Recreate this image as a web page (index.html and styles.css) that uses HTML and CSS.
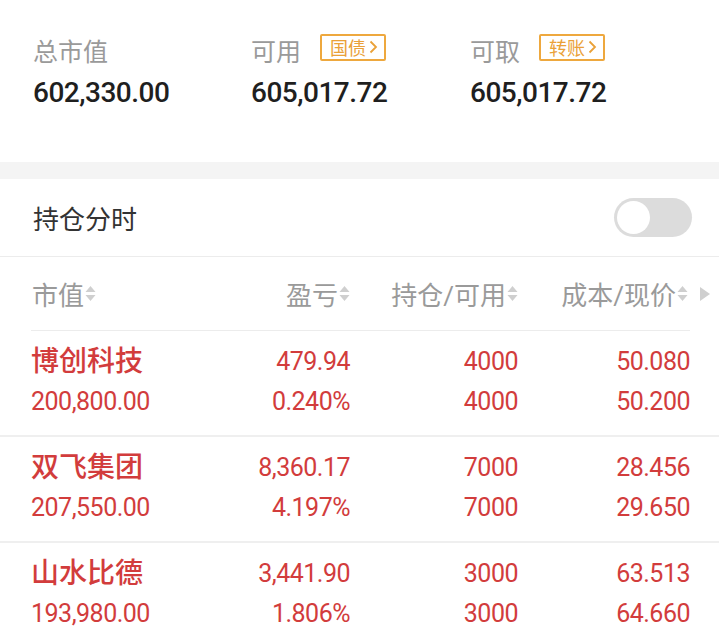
FILE: index.html
```html
<!DOCTYPE html>
<html lang="zh-CN">
<head>
    <meta charset="UTF-8">
    <meta name="viewport" content="width=device-width, initial-scale=1.0">
    <title>持仓</title>
    <link rel="stylesheet" href="styles.css">
</head>
<body>
    <div class="assets">
        <div class="asset">
            <div class="asset-label">总市值</div>
            <div class="asset-value">602,330.00</div>
        </div>
        <div class="asset">
            <div class="asset-label">可用
                <span class="tag">国债<svg width="9" height="14" viewBox="0 0 9 14"><polyline points="1.5,1.5 7,7 1.5,12.5" /></svg></span>
            </div>
            <div class="asset-value">605,017.72</div>
        </div>
        <div class="asset">
            <div class="asset-label">可取
                <span class="tag">转账<svg width="9" height="14" viewBox="0 0 9 14"><polyline points="1.5,1.5 7,7 1.5,12.5" /></svg></span>
            </div>
            <div class="asset-value">605,017.72</div>
        </div>
    </div>

    <div class="gap"></div>

    <div class="switch-row">
        <span class="switch-title">持仓分时</span>
        <div class="toggle"><div class="knob"></div></div>
    </div>

    <div class="table-head">
        <div class="th th-left">市值<svg class="sort" width="11" height="17" viewBox="0 0 11 17"><polygon points="0.5,7 5.5,1 10.5,7" /><polygon points="0.5,10 5.5,16 10.5,10" /></svg></div>
        <div class="th">盈亏<svg class="sort" width="11" height="17" viewBox="0 0 11 17"><polygon points="0.5,7 5.5,1 10.5,7" /><polygon points="0.5,10 5.5,16 10.5,10" /></svg></div>
        <div class="th">持仓/可用<svg class="sort" width="11" height="17" viewBox="0 0 11 17"><polygon points="0.5,7 5.5,1 10.5,7" /><polygon points="0.5,10 5.5,16 10.5,10" /></svg></div>
        <div class="th">成本/现价<svg class="sort" width="11" height="17" viewBox="0 0 11 17"><polygon points="0.5,7 5.5,1 10.5,7" /><polygon points="0.5,10 5.5,16 10.5,10" /></svg><svg class="more" width="10" height="14" viewBox="0 0 10 14"><polygon points="0,0 10,7 0,14" /></svg></div>
    </div>

    <div class="stock-row">
        <div class="cell cell-left"><span class="name">博创科技</span><span class="sub">200,800.00</span></div>
        <div class="cell"><span class="main">479.94</span><span class="sub">0.240%</span></div>
        <div class="cell"><span class="main">4000</span><span class="sub">4000</span></div>
        <div class="cell"><span class="main">50.080</span><span class="sub">50.200</span></div>
    </div>
    <div class="stock-row">
        <div class="cell cell-left"><span class="name">双飞集团</span><span class="sub">207,550.00</span></div>
        <div class="cell"><span class="main">8,360.17</span><span class="sub">4.197%</span></div>
        <div class="cell"><span class="main">7000</span><span class="sub">7000</span></div>
        <div class="cell"><span class="main">28.456</span><span class="sub">29.650</span></div>
    </div>
    <div class="stock-row">
        <div class="cell cell-left"><span class="name">山水比德</span><span class="sub">193,980.00</span></div>
        <div class="cell"><span class="main">3,441.90</span><span class="sub">1.806%</span></div>
        <div class="cell"><span class="main">3000</span><span class="sub">3000</span></div>
        <div class="cell"><span class="main">63.513</span><span class="sub">64.660</span></div>
    </div>
</body>
</html>
```

FILE: styles.css
```css
* {
    margin: 0;
    padding: 0;
    box-sizing: border-box;
}

body {
    font-family: Roboto, "Noto Sans CJK SC", sans-serif;
    background: #fff;
    width: 719px;
    overflow: hidden;
}

/* Asset summary */
.assets {
    display: grid;
    grid-template-columns: 218px 219px 1fr;
    padding: 35px 0 52px 33px;
    height: 162px;
}

.asset-label {
    display: flex;
    align-items: center;
    height: 30px;
    font-size: 25px;
    color: #9a9a9a;
}

.tag {
    display: flex;
    align-items: center;
    gap: 3px;
    height: 27px;
    margin-left: 19px;
    margin-bottom: 6px;
    padding: 0 6px 0 8px;
    border: 2px solid #eea83e;
    border-radius: 2px;
    font-size: 18px;
    color: #eaa138;
}

.tag polyline {
    fill: none;
    stroke: #eaa138;
    stroke-width: 1.8;
}

.asset-value {
    margin-top: 11px;
    height: 34px;
    line-height: 34px;
    font-size: 28px;
    font-weight: 500;
    letter-spacing: -0.5px;
    color: #1f1f1f;
}

.gap {
    height: 17px;
    background: #f4f4f4;
}

/* Switch row */
.switch-row {
    display: flex;
    align-items: center;
    justify-content: space-between;
    height: 78px;
    padding: 0 27px 0 33px;
    border-bottom: 1px solid #ececec;
}

.switch-title {
    font-size: 26px;
    color: #333;
}

.toggle {
    width: 78px;
    height: 39px;
    border-radius: 20px;
    background: #dcdcdc;
    padding: 3px;
}

.knob {
    width: 33px;
    height: 33px;
    border-radius: 50%;
    background: #fff;
}

/* Table */
.table-head {
    display: grid;
    grid-template-columns: 189px 130px 168px 172px;
    height: 74px;
    margin: 0 29px 0 31px;
    border-bottom: 1px solid #ececec;
}

.th {
    display: flex;
    align-items: center;
    justify-content: flex-end;
    font-size: 26px;
    color: #9a9a9a;
}

.th-left {
    justify-content: flex-start;
    padding-left: 1px;
}

.sort {
    margin-left: 1px;
    fill: #cfcfcf;
}

.more {
    margin-left: 12px;
    margin-right: -20px;
    fill: #cfcfcf;
}

.stock-row {
    display: grid;
    grid-template-columns: 189px 130px 168px 172px;
    padding: 13px 29px 11px 31px;
    border-bottom: 2px solid #efefef;
    color: #d23c3c;
}

.cell {
    display: flex;
    flex-direction: column;
    align-items: flex-end;
}

.cell-left {
    align-items: flex-start;
}

.name,
.main {
    height: 36px;
    line-height: 36px;
}

.name {
    font-size: 28px;
    font-weight: 500;
}

.main,
.sub {
    font-size: 25px;
    letter-spacing: -0.5px;
}

.sub {
    height: 44px;
    line-height: 44px;
}
```
